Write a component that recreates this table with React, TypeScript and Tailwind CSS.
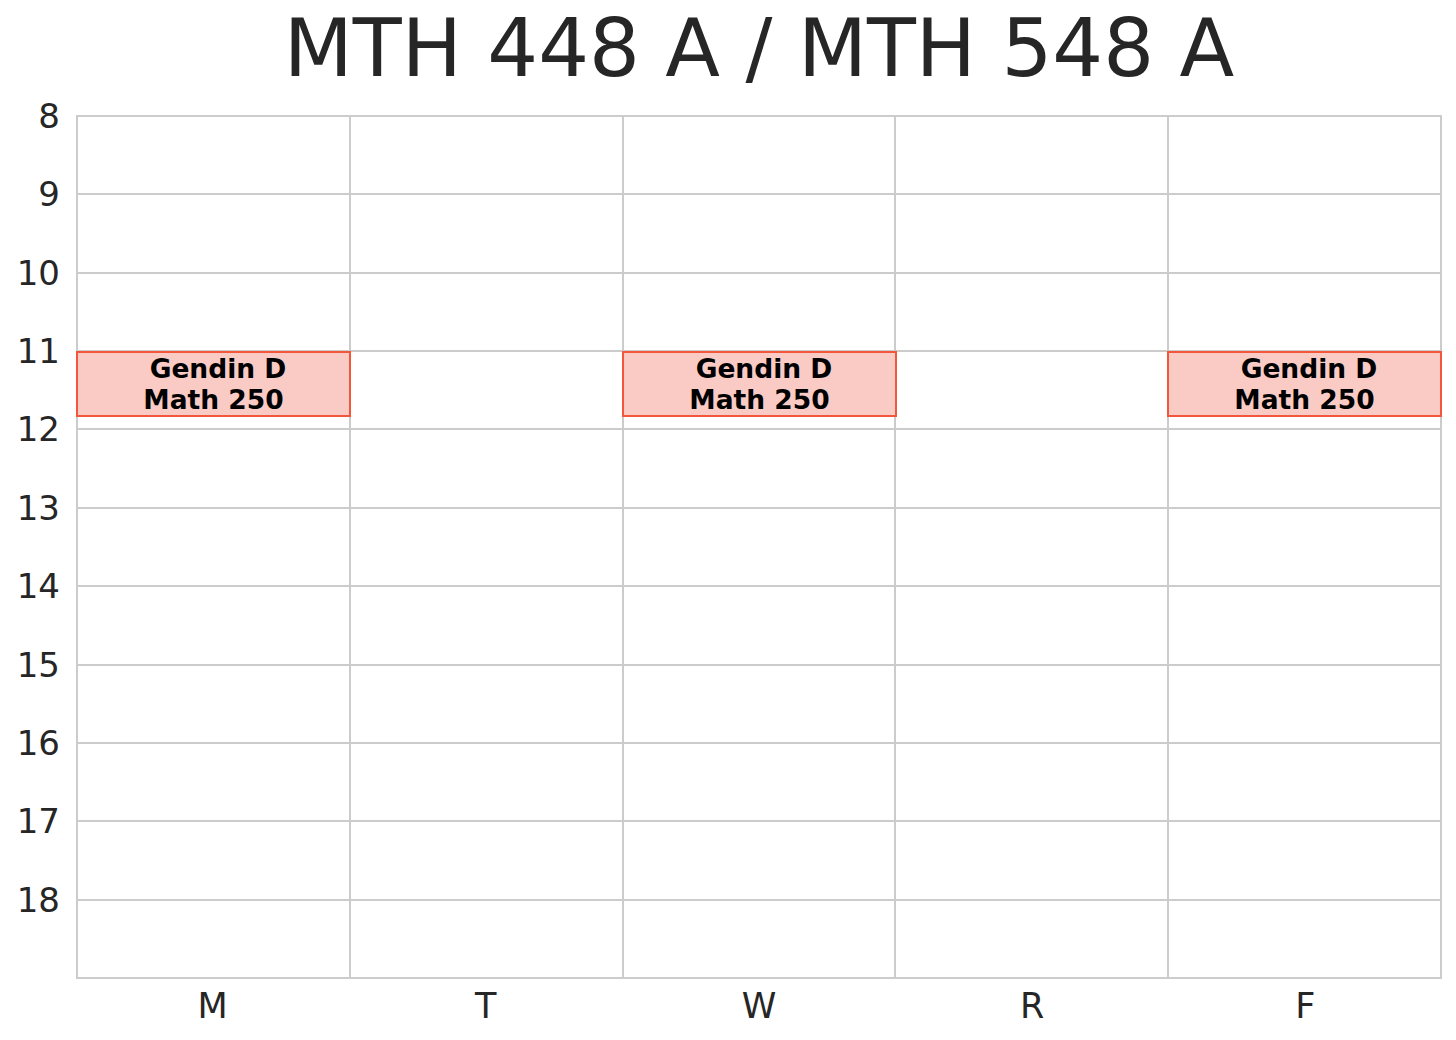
const hours = [8, 9, 10, 11, 12, 13, 14, 15, 16, 17, 18]
const days = ["M", "T", "W", "R", "F"]

const events = [
  { day: "M", left: "left-[0px]" },
  { day: "W", left: "left-[546px]" },
  { day: "F", left: "left-[1091px]" },
]

function EventBox({ left }: { left: string }) {
  return (
    <div
      className={`absolute top-[236px] h-[66px] w-[275px] ${left} flex flex-col items-center justify-center border-2 border-[#f2573b] bg-[#f9cbc4] text-[26.5px] leading-[31px] font-bold text-black`}
    >
      <span className="pl-[9px]">Gendin D</span>
      <span>Math 250</span>
    </div>
  )
}

export default function App() {
  return (
    <main
      className="w-[1456px] h-[1040px] bg-white text-[#262626]"
      style={{ fontFamily: '"DejaVu Sans", Verdana, sans-serif' }}
    >
      <h1 className="ml-[76px] w-[1366px] h-[115px] pt-[9px] text-center text-[80px] leading-none font-normal">
        MTH 448 A / MTH 548 A
      </h1>

      <div className="flex">
        {/* hour ticks */}
        <div className="w-[76px] flex flex-col pt-[1px]">
          {hours.map((h) => (
            <div key={h} className="h-[78.36px] pr-[16px] text-right">
              <span className="block -translate-y-1/2 text-[34px] leading-none">{h}</span>
            </div>
          ))}
        </div>

        {/* grid */}
        <div className="relative w-[1366px] h-[864px] bg-[#cccccc] p-[2px] grid grid-cols-5 grid-rows-[repeat(11,minmax(0,1fr))] gap-[2px]">
          {Array.from({ length: 55 }).map((_, i) => (
            <div key={i} className="bg-white" />
          ))}
          {events.map((e) => (
            <EventBox key={e.day} left={e.left} />
          ))}
        </div>
      </div>

      <div className="ml-[76px] mt-[10px] w-[1366px] grid grid-cols-5 text-center text-[35px] leading-none">
        {days.map((d) => (
          <span key={d}>{d}</span>
        ))}
      </div>
    </main>
  )
}
